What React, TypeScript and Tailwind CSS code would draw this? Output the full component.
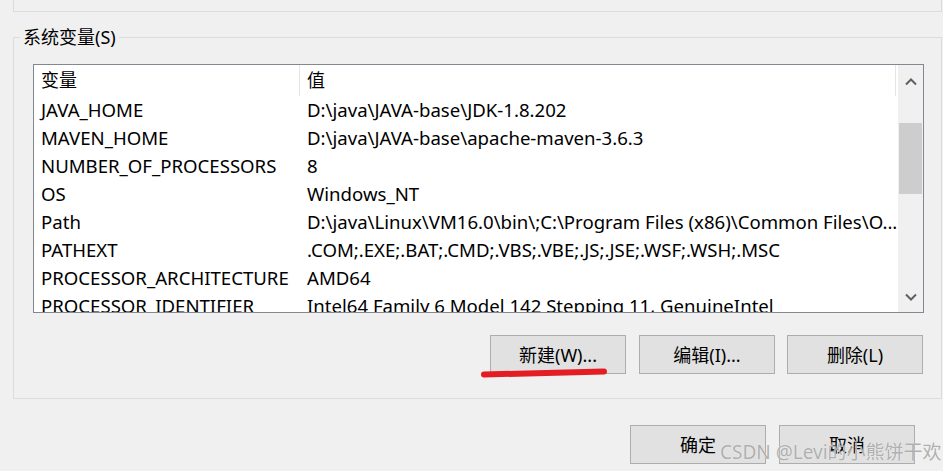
import React from "react";

const rows: [string, string][] = [
  ["JAVA_HOME", "D:\\java\\JAVA-base\\JDK-1.8.202"],
  ["MAVEN_HOME", "D:\\java\\JAVA-base\\apache-maven-3.6.3"],
  ["NUMBER_OF_PROCESSORS", "8"],
  ["OS", "Windows_NT"],
  ["Path", "D:\\java\\Linux\\VM16.0\\bin\\;C:\\Program Files (x86)\\Common Files\\O..."],
  ["PATHEXT", ".COM;.EXE;.BAT;.CMD;.VBS;.VBE;.JS;.JSE;.WSF;.WSH;.MSC"],
  ["PROCESSOR_ARCHITECTURE", "AMD64"],
  ["PROCESSOR_IDENTIFIER", "Intel64 Family 6 Model 142 Stepping 11, GenuineIntel"],
];

const font = "font-['Noto_Sans','Noto_Sans_CJK_SC',sans-serif]";

function Btn({ label }: { label: string }) {
  return (
    <div className="w-[136px] h-[39px] bg-[#e1e1e1] border border-[#adadad] flex items-center justify-center text-[18px] text-black leading-none">
      {label}
    </div>
  );
}

export default function App() {
  return (
    <div className={`relative w-[943px] h-[471px] bg-[#f0f0f0] overflow-hidden ${font} text-black`}>
      {/* top group box remnant */}
      <div className="ml-[13px] w-[929px] h-[12px] border-l border-r border-b border-[#dcdcdc]" />

      <fieldset className="ml-[13px] mt-[13px] w-[929px] h-[374px] border border-[#dcdcdc] px-0 pb-0">
        <legend className="ml-[6px] px-[3px] text-[18px] leading-[24px]">系统变量(S)</legend>

        <div className="ml-[19px] mt-[15px] w-[891px] h-[249px] border border-[#828790] bg-white flex">
          <div className="flex-1 overflow-hidden">
            <div className="h-[31px] flex items-center text-[18px]">
              <div className="w-[266px] pl-[7px] border-r border-[#e5e5e5] h-full flex items-center">变量</div>
              <div className="flex-1 pl-[7px] border-r border-[#e5e5e5] h-full flex items-center">值</div>
              <div className="w-[2px]" />
            </div>
            {rows.map(([k, v]) => (
              <div key={k} className="h-[28px] flex items-center text-[18.6px] whitespace-nowrap">
                <div className="w-[267px] pl-[7px]">{k}</div>
                <div className="pl-[6px]">{v}</div>
              </div>
            ))}
          </div>
          <div className="w-[25px] bg-[#f0f0f0] flex flex-col">
            <div className="h-[34px] flex items-center justify-center">
              <svg width="12" height="8" viewBox="0 0 12 8">
                <path d="M1 6.5 L6 1.5 L11 6.5" fill="none" stroke="#606060" strokeWidth="2" />
              </svg>
            </div>
            <div className="mt-[24px] h-[71px] mx-[1px] bg-[#cdcdcd]" />
            <div className="flex-1" />
            <div className="h-[30px] flex items-center justify-center">
              <svg width="12" height="8" viewBox="0 0 12 8">
                <path d="M1 1.5 L6 6.5 L11 1.5" fill="none" stroke="#606060" strokeWidth="2" />
              </svg>
            </div>
          </div>
        </div>

        <div className="mt-[22px] w-[909px] flex justify-end gap-[12px]">
          <div className="mr-[1px]">
            <Btn label="新建(W)..." />
          </div>
          <Btn label="编辑(I)..." />
          <Btn label="删除(L)" />
        </div>
      </fieldset>

      <div className="mt-[26px] w-[915px] flex justify-end gap-[13px]">
        <Btn label="确定" />
        <Btn label="取消" />
      </div>

      {/* red annotation underline */}
      <svg className="absolute left-0 top-0 pointer-events-none" width="943" height="471">
        <path d="M484 374.5 Q545 373 604 371.5" fill="none" stroke="#e41c23" strokeWidth="6" strokeLinecap="round" />
      </svg>

      {/* watermark */}
      <div className="absolute left-[720px] top-[439px] text-[19px] leading-[26px] text-[#9a9a9a]/80 whitespace-nowrap [text-shadow:0_0_1px_#ffffff]">
        CSDN @Levi的小熊饼干欢
      </div>
    </div>
  );
}
